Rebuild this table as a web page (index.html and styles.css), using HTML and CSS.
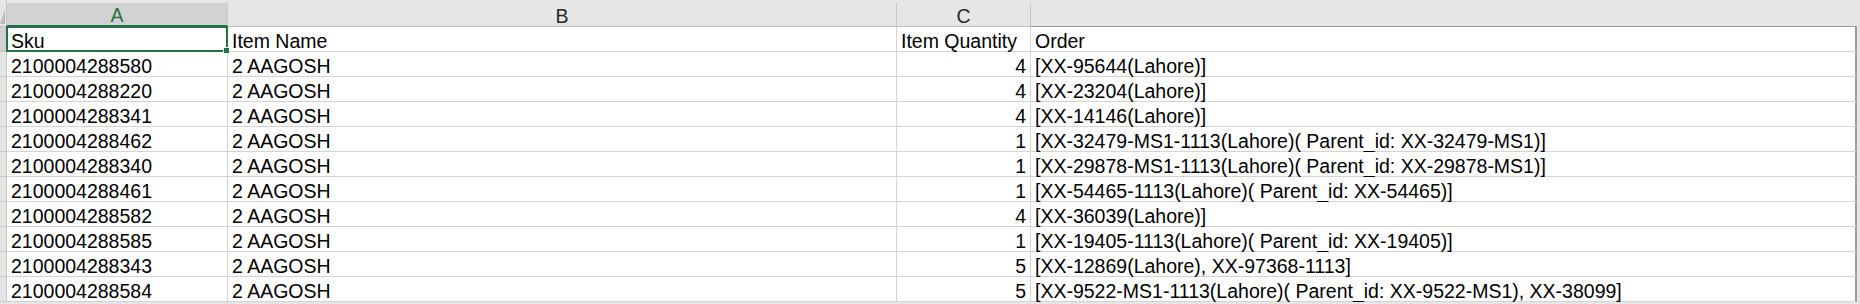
FILE: index.html
```html
<!DOCTYPE html>
<html lang="en">
  <head>
    <meta charset="UTF-8" />
    <meta name="viewport" content="width=device-width, initial-scale=1.0" />
    <title>Sku Orders</title>
    <link rel="stylesheet" href="styles.css">
  </head>
  <body>
    <div class="sheet">
      <!-- column letters -->
      <div class="corner"><span class="tri"></span></div>
      <div class="ch on">A</div>
      <div class="ch">B</div>
      <div class="ch">C</div>
      <div class="ch last"></div>

      <!-- header row -->
      <div class="rh on"></div>
      <div class="cell sel">Sku</div>
      <div class="cell">Item Name</div>
      <div class="cell">Item Quantity</div>
      <div class="cell">Order</div>

      <div class="rh"></div>
      <div class="cell">2100004288580</div>
      <div class="cell">2 AAGOSH</div>
      <div class="cell num">4</div>
      <div class="cell">[XX-95644(Lahore)]</div>

      <div class="rh"></div>
      <div class="cell">2100004288220</div>
      <div class="cell">2 AAGOSH</div>
      <div class="cell num">4</div>
      <div class="cell">[XX-23204(Lahore)]</div>

      <div class="rh"></div>
      <div class="cell">2100004288341</div>
      <div class="cell">2 AAGOSH</div>
      <div class="cell num">4</div>
      <div class="cell">[XX-14146(Lahore)]</div>

      <div class="rh"></div>
      <div class="cell">2100004288462</div>
      <div class="cell">2 AAGOSH</div>
      <div class="cell num">1</div>
      <div class="cell">[XX-32479-MS1-1113(Lahore)( Parent_id: XX-32479-MS1)]</div>

      <div class="rh"></div>
      <div class="cell">2100004288340</div>
      <div class="cell">2 AAGOSH</div>
      <div class="cell num">1</div>
      <div class="cell">[XX-29878-MS1-1113(Lahore)( Parent_id: XX-29878-MS1)]</div>

      <div class="rh"></div>
      <div class="cell">2100004288461</div>
      <div class="cell">2 AAGOSH</div>
      <div class="cell num">1</div>
      <div class="cell">[XX-54465-1113(Lahore)( Parent_id: XX-54465)]</div>

      <div class="rh"></div>
      <div class="cell">2100004288582</div>
      <div class="cell">2 AAGOSH</div>
      <div class="cell num">4</div>
      <div class="cell">[XX-36039(Lahore)]</div>

      <div class="rh"></div>
      <div class="cell">2100004288585</div>
      <div class="cell">2 AAGOSH</div>
      <div class="cell num">1</div>
      <div class="cell">[XX-19405-1113(Lahore)( Parent_id: XX-19405)]</div>

      <div class="rh"></div>
      <div class="cell">2100004288343</div>
      <div class="cell">2 AAGOSH</div>
      <div class="cell num">5</div>
      <div class="cell">[XX-12869(Lahore), XX-97368-1113]</div>

      <div class="rh"></div>
      <div class="cell">2100004288584</div>
      <div class="cell">2 AAGOSH</div>
      <div class="cell num">5</div>
      <div class="cell">[XX-9522-MS1-1113(Lahore)( Parent_id: XX-9522-MS1), XX-38099]</div>
    </div>
  </body>
</html>
```

FILE: styles.css
```css
/* Page */
body {
  margin: 0;
  background: #e6e6e6;
  font-family: "Liberation Sans", Arial, sans-serif;
  font-size: 19.5px;
  color: #000;
}

/* Grid of cells */
.sheet {
  display: grid;
  grid-template-columns: 7px 221px 669px 134px 826px;
  grid-template-rows: 24px;
  grid-auto-rows: 25px;
  padding-top: 3px;
}

.sheet > div {
  box-sizing: border-box;
  display: flex;
  align-items: flex-end;
  line-height: 20px;
  white-space: nowrap;
}

/* Select-all corner */
.corner {
  position: relative;
  margin-top: -3px;
  height: 27px;
  background: #e6e6e6;
  border-right: 1px solid #c8c8c8;
  border-bottom: 1px solid #bfbfbf;
}

.corner .tri {
  position: absolute;
  right: 1px;
  bottom: 2px;
  width: 5px;
  height: 14px;
  background: #b9b9b9;
  clip-path: polygon(100% 0, 100% 100%, 0 100%);
}

/* Column letters */
.ch {
  justify-content: center;
  background: #e6e6e6;
  color: #262626;
  border-right: 1px solid #c8c8c8;
  border-bottom: 1px solid #bfbfbf;
}

.ch.on {
  background: #d2d2d2;
  color: #217346;
  border-bottom: 2px solid #217346;
}

.ch.last {
  border-right: none;
  border-bottom-color: #9b9b9b;
}

/* Row numbers (mostly off screen) */
.rh {
  background: #e6e6e6;
  border-right: 1px solid #c8c8c8;
  border-bottom: 1px solid #c8c8c8;
}

.rh.on {
  background: #d2d2d2;
}

/* Data cells */
.cell {
  background: #fff;
  padding: 0 4px 0 4px;
  border-right: 1px solid #d4d4d4;
  border-bottom: 1px solid #d4d4d4;
}

.cell.num {
  justify-content: flex-end;
}

.sheet > .cell:nth-child(5n) {
  border-right: 2px solid #9b9b9b;
}

/* Active cell outline + fill handle */
.sel {
  position: relative;
}

.sel::after {
  content: "";
  position: absolute;
  left: -1px;
  top: -1px;
  right: -1px;
  bottom: -1px;
  border: 2px solid #217346;
}

.sel::before {
  content: "";
  position: absolute;
  right: -3px;
  bottom: -3px;
  width: 5px;
  height: 5px;
  background: #217346;
  border: 1px solid #fff;
  z-index: 1;
}
```
